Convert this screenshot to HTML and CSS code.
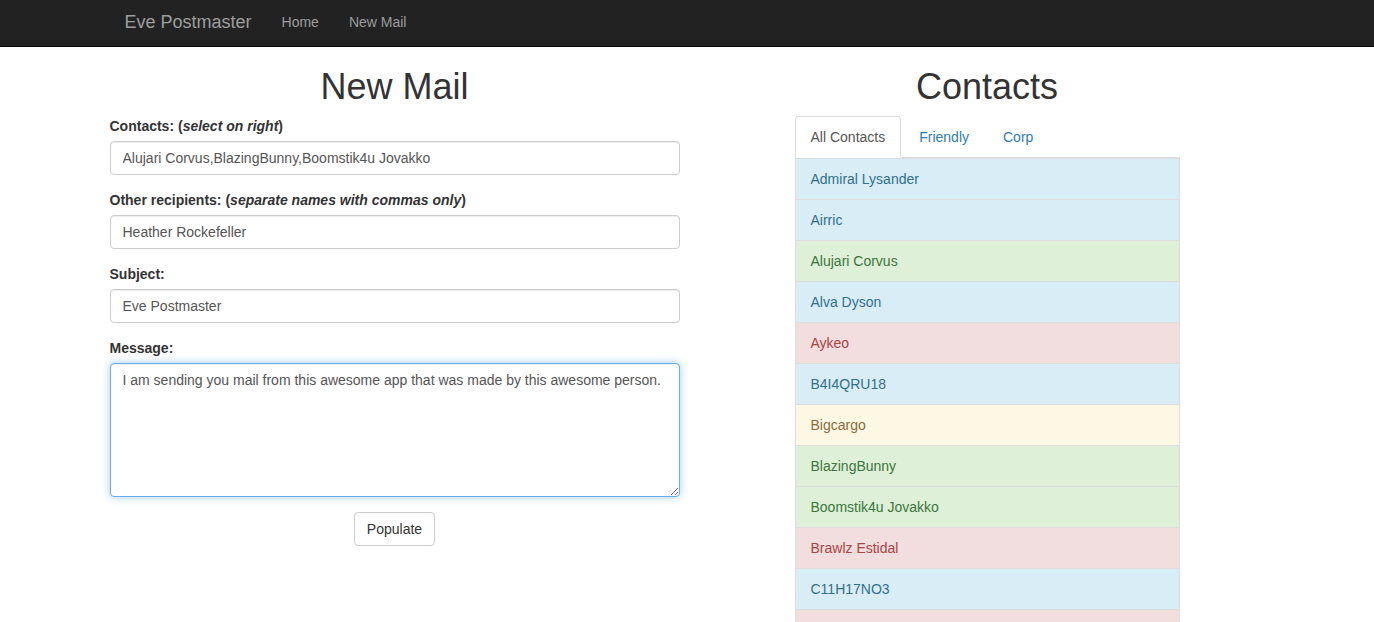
FILE: index.html
```html
<!DOCTYPE html>
<html>
<head>
<meta charset="utf-8">
<title>Eve Postmaster</title>
<link rel="stylesheet" href="styles.css">
</head>
<body>
<nav class="navbar">
  <div class="container nav-inner">
    <a class="brand" href="#">Eve Postmaster</a>
    <ul class="nav-links">
      <li><a href="#">Home</a></li>
      <li><a href="#">New Mail</a></li>
    </ul>
  </div>
</nav>
<main class="container main">
  <section class="mail-col">
    <h1>New Mail</h1>
    <form class="mail-form">
      <div class="form-group">
        <label>Contacts: (<em>select on right</em>)</label>
        <input class="form-control" type="text" value="Alujari Corvus,BlazingBunny,Boomstik4u Jovakko">
      </div>
      <div class="form-group">
        <label>Other recipients: (<em>separate names with commas only</em>)</label>
        <input class="form-control" type="text" value="Heather Rockefeller">
      </div>
      <div class="form-group">
        <label>Subject:</label>
        <input class="form-control" type="text" value="Eve Postmaster">
      </div>
      <div class="form-group">
        <label>Message:</label>
        <textarea class="form-control message" rows="6">I am sending you mail from this awesome app that was made by this awesome person.</textarea>
      </div>
      <div class="actions">
        <button type="button" class="btn">Populate</button>
      </div>
    </form>
  </section>
  <section class="contacts-col">
    <h1>Contacts</h1>
    <ul class="tabs">
      <li class="tab active"><a href="#">All Contacts</a></li>
      <li class="tab"><a href="#">Friendly</a></li>
      <li class="tab"><a href="#">Corp</a></li>
    </ul>
    <ul class="list-group">
      <li class="item info">Admiral Lysander</li>
      <li class="item info">Airric</li>
      <li class="item success">Alujari Corvus</li>
      <li class="item info">Alva Dyson</li>
      <li class="item danger">Aykeo</li>
      <li class="item info">B4I4QRU18</li>
      <li class="item warning">Bigcargo</li>
      <li class="item success">BlazingBunny</li>
      <li class="item success">Boomstik4u Jovakko</li>
      <li class="item danger">Brawlz Estidal</li>
      <li class="item info">C11H17NO3</li>
      <li class="item danger">&nbsp;</li>
    </ul>
  </section>
</main>
</body>
</html>
```
FILE: styles.css
```css
* { box-sizing: border-box; }
html, body { overflow: hidden; }
body {
  margin: 0;
  font-family: "Liberation Sans", Arial, Helvetica, sans-serif;
  font-size: 14px;
  line-height: 20px;
  color: #333;
  background: #fff;
}
a { text-decoration: none; }
.container {
  width: 1155px;
  margin: 0 auto;
}
.navbar {
  background: #222;
  border-bottom: 1px solid #080808;
  height: 47px;
}
.nav-inner {
  display: flex;
  align-items: stretch;
  height: 46px;
}
.brand {
  font-size: 18px;
  color: #9d9d9d;
  padding: 12px 15px 0;
  line-height: 20px;
}
.nav-links {
  list-style: none;
  margin: 0;
  padding: 0;
  display: flex;
}
.nav-links a {
  display: block;
  color: #9d9d9d;
  padding: 12px 15px 0;
  line-height: 20px;
}
.main {
  display: flex;
  align-items: flex-start;
  gap: 115px;
}
h1 {
  font-size: 36px;
  font-weight: 500;
  line-height: 40px;
  margin: 20px 0 9px;
  text-align: center;
}
.mail-col { width: 570px; flex: none; }
.contacts-col { width: 385px; flex: none; }
.form-group { margin-bottom: 15px; }
label {
  display: inline-block;
  font-weight: bold;
  margin-bottom: 5px;
}
.form-control {
  display: block;
  width: 100%;
  height: 34px;
  padding: 6px 12px;
  font-family: inherit;
  font-size: 14px;
  line-height: 20px;
  color: #555;
  background: #fff;
  border: 1px solid #ccc;
  border-radius: 4px;
  box-shadow: inset 0 1px 1px rgba(0,0,0,.075);
  margin: 0;
}
.message {
  height: 134px;
  resize: vertical;
  border-color: #66afe9;
  box-shadow: inset 0 1px 1px rgba(0,0,0,.075), 0 0 8px rgba(102,175,233,.6);
  outline: none;
}
.actions { text-align: center; }
.btn {
  font-family: inherit;
  font-size: 14px;
  line-height: 20px;
  padding: 6px 12px;
  color: #333;
  background: #fff;
  border: 1px solid #ccc;
  border-radius: 4px;
}
.tabs {
  list-style: none;
  margin: 0;
  padding: 0;
  display: flex;
  border-bottom: 1px solid #ddd;
}
.tab { margin-right: 2px; margin-bottom: -1px; }
.tab a {
  display: block;
  padding: 10px 15px;
  line-height: 20px;
  color: #337ab7;
  border: 1px solid transparent;
  border-radius: 4px 4px 0 0;
}
.tab.active a {
  color: #555;
  background: #fff;
  border-color: #ddd #ddd transparent;
}
.list-group {
  list-style: none;
  margin: 0;
  padding: 0;
}
.item {
  padding: 10px 15px;
  border: 1px solid #ddd;
  margin-bottom: -1px;
  line-height: 20px;
}
.info { background: #d9edf7; color: #31708f; }
.success { background: #dff0d8; color: #3c763d; }
.danger { background: #f2dede; color: #a94442; }
.warning { background: #fcf8e3; color: #8a6d3b; }
```
